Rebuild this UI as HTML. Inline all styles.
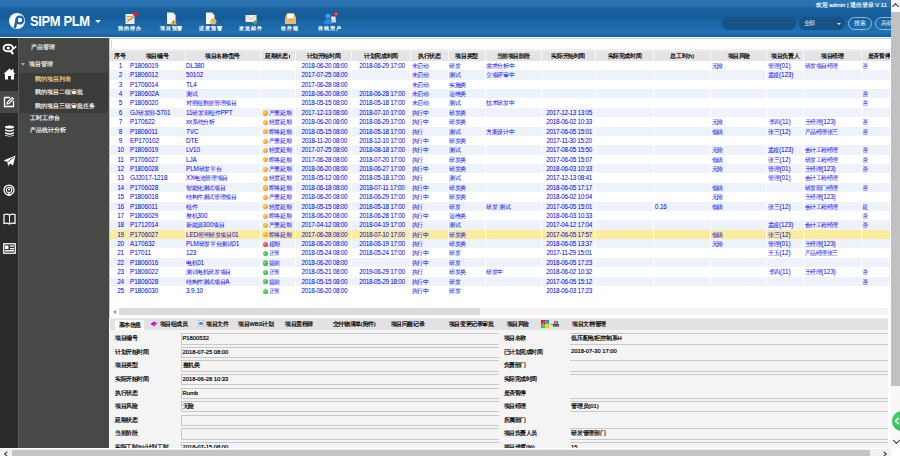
<!DOCTYPE html>
<html><head><meta charset="utf-8"><title>SIPM PLM</title>
<style>
*{box-sizing:border-box}
html,body{margin:0;padding:0}
i.k{display:inline-block;width:calc(1em + var(--ls,0px));font-style:normal;text-align:left;overflow:visible}
.nocjk i.k{text-align:center;width:1em;margin-right:var(--ls,0px);letter-spacing:0;transform:scale(1.3,1.1);transform-origin:50% 62%;-webkit-text-stroke:0.3px currentColor}
body{width:900px;height:456px;overflow:hidden;position:relative;background:#fff;font-family:"Liberation Sans",sans-serif;}
.abs{position:absolute}
#hdr{position:absolute;left:0;top:0;width:891px;height:37px;background:linear-gradient(#2d75b3 0px,#2b72b0 6px,#1a62a0 8.5px,#165f9c 12px,#145d99 19px,#1b67a6 22px,#1e6cab 30px,#2574ba 32px,#1c67a7 34px,#1a63a3 37px);}
#hline{position:absolute;left:0;top:37px;width:891px;height:1px;background:#f4f8f8}
.logo{position:absolute;left:8.8px;top:12.9px;width:16.3px;height:16.4px;border-radius:50%;background:#fbfbf6}
.brand{position:absolute;left:29.5px;top:14.3px;font-size:14.4px;line-height:14px;font-weight:bold;color:#fff;letter-spacing:-0.4px;transform:scaleX(0.9);transform-origin:0 0}
.caret{position:absolute;left:94.6px;top:20px;width:0;height:0;border-left:3.2px solid transparent;border-right:3.2px solid transparent;border-top:3.8px solid #f0f4f8}
.tb{position:absolute;top:10.5px;width:40px;text-align:center}
.tb .lb{position:absolute;top:15.8px;left:-5px;width:50px;text-align:center;font-size:5px;line-height:5px;letter-spacing:0.9px;--ls:0.9px;color:#fff;-webkit-text-stroke:0.2px #fff}
.welcome{position:absolute;right:4px;top:2.3px;font-size:5.9px;line-height:6px;color:#fff;white-space:nowrap;-webkit-text-stroke:0.15px #fff}
.pill{position:absolute;top:16.5px;height:13.5px;border-radius:7px;background:#165386}
.btn{position:absolute;top:17px;height:13px;border-radius:7px;border:1px solid rgba(190,215,240,0.75);color:#fff;font-size:5.6px;line-height:11px;text-align:center}
#icol{position:absolute;left:0;top:38px;width:18px;height:410px;background:#2a2c2a}
#icol .act{position:absolute;left:0;top:53px;width:18px;height:22px;background:#474947}
.ic{position:absolute;left:0;width:18px;height:14px;display:flex;align-items:center;justify-content:center}
#isep{position:absolute;left:17.5px;top:38px;width:1.2px;height:410px;background:#5b5d5b}
#side{position:absolute;left:18.7px;top:38px;width:90px;height:410px;background:#474947}
#sub{position:absolute;left:0;top:35px;width:89px;height:39.5px;background:#3a3c3a}
.mi{position:absolute;font-size:6px;line-height:7px;color:#ffffff;white-space:nowrap;-webkit-text-stroke:0.15px #fff}
#cborder{position:absolute;left:108.6px;top:38px;width:1.4px;height:410px;background:linear-gradient(#c4c5c4 0,#c4c5c4 280px,#fafafa 280px)}
#content{position:absolute;left:110px;top:38px;width:781px;height:410px;background:#fff;overflow:hidden}
#ctop{position:absolute;left:0;top:0;width:781px;height:1px;background:#cfd6d2}
#tbox{position:absolute;left:1.3px;top:1.5px;width:800px;height:10px;border-left:1px solid #d6d6d6;border-bottom:1px solid #eeeeee;border-radius:0 0 0 2.5px}
#thead{position:absolute;left:0;top:11.7px;width:780.4px;height:11.4px;background:#e4e4e4;border-top:1px solid #f2f2f2;overflow:hidden}
.hc{position:absolute;top:0;height:10.4px;line-height:10.4px;font-size:5.6px;color:#000;text-align:center;white-space:nowrap;-webkit-text-stroke:0.2px #000}
.hvs{position:absolute;top:0;width:1px;height:11px;background:#f7f7f7}
#tbody{position:absolute;left:0;top:22.9px;width:780.4px;height:240px;overflow:hidden}
.r{position:absolute;left:0;width:780.4px;height:9.375px}
.c{position:absolute;top:0;height:9.375px;line-height:9.8px;font-size:6.4px;font-weight:normal;letter-spacing:-0.12px;color:#0000f8;white-space:nowrap;overflow:hidden;padding-left:1px}
.c .z{font-size:5.7px;letter-spacing:-0.1px;--ls:-0.1px}
.c.ctr{text-align:center;padding-left:2px;letter-spacing:-0.3px}
.c.rt{text-align:right;padding-right:13px}
.vs{position:absolute;top:0;width:1px;height:9.375px;background:rgba(255,255,255,0.9)}
.dot{display:inline-block;width:5px;height:5.2px;border-radius:50% 50% 45% 45%;margin:0 1.3px 0 1.6px;vertical-align:-0.8px}
.dot.do{background:radial-gradient(circle at 35% 35%,#ffd060,#e88a00)}
.dot.dr{background:radial-gradient(circle at 35% 35%,#ff8080,#d01818)}
.dot.dg{background:radial-gradient(circle at 35% 35%,#80e080,#18a018)}
#hscroll{position:absolute;left:0;top:270px;width:778.4px;height:7.2px;background:#f6f2f5}
#hsarr{position:absolute;left:0;top:0;width:8.7px;height:7.2px;background:#fff;color:#9a9a9a;font-size:5px;line-height:7px;text-align:center}
#hsthumb{position:absolute;left:8.7px;top:0;width:361.3px;height:7.2px;background:#dbdcdb}
#tabs{position:absolute;left:0;top:280px;width:778.4px;height:12px;background:#e1e2e1;border-top:1px solid #ececec}
.tab{position:absolute;top:0;height:11px;line-height:11.5px;font-size:5.6px;color:#000;white-space:nowrap;-webkit-text-stroke:0.2px #000}
.tab.act{background:#fbfbfb;top:1px;height:11px;line-height:10.5px;border-radius:1.5px 1.5px 0 0;text-align:center}
.bi{font-size:4px;margin-right:1px}
#form{position:absolute;left:0;top:292px;width:778.4px;height:118px;background:#f4f4f4}
.fl{position:absolute;height:11px;line-height:11.5px;font-size:5.6px;color:#000;white-space:nowrap;-webkit-text-stroke:0.2px #000}
.fi{position:absolute;height:11.3px;background:#f4f4f4;border:1px solid #c9c9c9;border-right:none;font-size:5.8px;line-height:8.6px;padding-left:1px;color:#000;white-space:nowrap;-webkit-text-stroke:0.2px #000}
.fi2{position:absolute;height:11.3px;border-top:1px solid #c9c9c9;border-bottom:1px solid #c9c9c9;font-size:5.8px;line-height:8.6px;padding-left:1px;color:#000;white-space:nowrap;-webkit-text-stroke:0.2px #000}
.fi3{position:absolute;height:11.3px;font-size:5.8px;line-height:8.6px;padding-left:1px;color:#000;white-space:nowrap;-webkit-text-stroke:0.2px #000}
#vscroll{position:absolute;left:891px;top:0;width:9px;height:448px;background:#f8f8f8}
#vthumb{position:absolute;left:0;top:12px;width:9px;height:374px;background:#c1c1c1}
#bscroll{position:absolute;left:0;top:448px;width:891px;height:8px;background:#f0f0f0;border-top:1px solid #fff}
#bthumb{position:absolute;left:12px;top:1px;width:858px;height:8px;background:#c4c4c4}
.green{position:absolute;left:891.5px;top:410.5px;width:20px;height:20px;border-radius:50%;background:radial-gradient(circle at 40% 40%,#4cd870,#22b048);box-shadow:0 0 0 1px rgba(255,255,255,.7),0 0 2px rgba(0,0,0,.3)}
</style></head><body>
<div id="hdr">
  <div class="logo"><svg width="16.5" height="16.5" viewBox="0 0 33 33"><path d="M16.5 11 L11.5 30" fill="none" stroke="#1c63a6" stroke-width="5"/><ellipse cx="21.5" cy="14" rx="7" ry="6.8" fill="none" stroke="#1c63a6" stroke-width="4.4"/><path d="M6 9 Q12 4 19 4" fill="none" stroke="#dfe8f0" stroke-width="1.2"/></svg></div>
  <div class="brand">SIPM PLM</div>
  <div class="caret"></div>
  <div class="tb" style="left:110px"><svg width="13" height="13" viewBox="0 0 26 26" style="margin-top:0"><rect x="3" y="4" width="18" height="20" fill="#f6efe0"/><rect x="5" y="8" width="14" height="2.5" fill="#e0a050"/><rect x="5" y="13" width="10" height="2.5" fill="#e0a050"/><path d="M6 20 L20 10" stroke="#c07020" stroke-width="2"/><circle cx="22.5" cy="3.8" r="4.6" fill="#e52020"/></svg><div class="lb"><i class="k">我</i><i class="k">的</i><i class="k">待</i><i class="k">办</i></div></div>
  <div class="tb" style="left:151.5px"><svg width="13" height="13" viewBox="0 0 26 26"><path d="M4 1 H16 L21 6 V24 H4 Z" fill="#f8f6f0"/><path d="M16 1 V6 H21" fill="#ddd"/><path d="M17 15 L24 25 H10 Z" fill="#f0b820"/><rect x="16.5" y="18" width="1.2" height="4" fill="#333"/></svg><div class="lb"><i class="k">项</i><i class="k">目</i><i class="k">预</i><i class="k">警</i></div></div>
  <div class="tb" style="left:190.7px"><svg width="13" height="13" viewBox="0 0 26 26"><path d="M4 1 H16 L21 6 V24 H4 Z" fill="#f8f6f0"/><circle cx="19" cy="19" r="5.5" fill="#f6d080" stroke="#e09020" stroke-width="1.6"/><path d="M19 16 V19 H21" stroke="#906020" stroke-width="1.2" fill="none"/></svg><div class="lb"><i class="k">进</i><i class="k">度</i><i class="k">预</i><i class="k">警</i></div></div>
  <div class="tb" style="left:231px"><svg width="13" height="13" viewBox="0 0 26 26" style="margin-top:2px"><rect x="1" y="4" width="22" height="14" fill="#f4ece0"/><path d="M1 4 L12 13 L23 4" fill="none" stroke="#c8b8a0" stroke-width="1.5"/><path d="M15 19 H22 M19 15 L23 19 L19 23" stroke="#40b040" stroke-width="3" fill="none"/></svg><div class="lb"><i class="k">发</i><i class="k">送</i><i class="k">邮</i><i class="k">件</i></div></div>
  <div class="tb" style="left:270.3px"><svg width="13" height="13" viewBox="0 0 26 26"><path d="M2 10 L6 3 H20 L24 10 V24 H2 Z" fill="#e8a050"/><rect x="6" y="3" width="14" height="10" fill="#fafafa"/><path d="M2 10 L13 18 L24 10 V24 H2 Z" fill="#f0b870"/></svg><div class="lb"><i class="k">收</i><i class="k">件</i><i class="k">箱</i></div></div>
  <div class="tb" style="left:310px"><svg width="15" height="13" viewBox="0 0 30 26"><circle cx="10" cy="8" r="5" fill="#3a9ae8"/><path d="M1 24 Q1 14 10 14 Q19 14 19 24Z" fill="#2a86d8"/><rect x="16" y="9" width="9" height="6" fill="#e8e8e8"/><rect x="17" y="14" width="9" height="7" fill="#d0d0d0"/><circle cx="26" cy="4" r="4.3" fill="#e52020"/><rect x="25.3" y="1.8" width="1.4" height="4.4" fill="#fff"/></svg><div class="lb"><i class="k">在</i><i class="k">线</i><i class="k">用</i><i class="k">户</i></div></div>
  <div class="welcome"><i class="k">欢</i><i class="k">迎</i> admin | <i class="k">退</i><i class="k">出</i><i class="k">登</i><i class="k">录</i> V 11</div>
  <div class="pill" style="left:722px;width:74px"></div>
  <div class="pill" style="left:799px;width:45.5px;top:17px;height:13px"><span style="position:absolute;left:4.5px;top:3.2px;font-size:5.6px;line-height:6px;color:#fff"><i class="k">全</i><i class="k">部</i></span><span style="position:absolute;left:38px;top:5.5px;border-left:2px solid transparent;border-right:2px solid transparent;border-top:2.2px solid #e6eef6"></span></div>
  <div class="btn" style="left:848px;width:23.5px"><i class="k">搜</i><i class="k">索</i></div>
  <div class="btn" style="left:874.5px;width:24px"><i class="k">高</i><i class="k">级</i></div>
</div>
<div id="hline"></div>
<div id="icol"><div class="act"></div><div class="ic" style="top:4px"><svg width="15" height="12" viewBox="0 0 30 24"><ellipse cx="12.5" cy="10" rx="9.5" ry="6.8" fill="none" stroke="#fff" stroke-width="3.6"/><circle cx="12.5" cy="10" r="3.2" fill="#fff"/><path d="M20 7.5 L24 11 L28.5 6.5" fill="none" stroke="#fff" stroke-width="3"/><path d="M16.5 15.5 L22.5 22" stroke="#fff" stroke-width="4.2"/></svg></div><div class="ic" style="top:29px"><svg width="13" height="12" viewBox="0 0 26 24"><path d="M13 1 L1 12 L4 12 L4 23 L10 23 L10 16 L16 16 L16 23 L22 23 L22 12 L25 12 Z" fill="#fff"/><rect x="18" y="2" width="3" height="6" fill="#fff"/></svg></div><div class="ic" style="top:57px"><svg width="12" height="12" viewBox="0 0 24 24"><path d="M14 3 H3 V21 H21 V10" fill="none" stroke="#fff" stroke-width="2.6"/><path d="M8 16 L9 12 L18 3 L21 6 L12 15 Z" fill="none" stroke="#fff" stroke-width="2.2"/></svg></div><div class="ic" style="top:86px"><svg width="11" height="12" viewBox="0 0 22 24"><ellipse cx="11" cy="4" rx="9" ry="3" fill="#fff"/><path d="M2 8 Q11 13 20 8 V11 Q11 16 2 11 Z M2 14 Q11 19 20 14 V17 Q11 22 2 17 Z M2 19.5 Q11 24 20 19.5 V21 Q11 25 2 21Z" fill="#fff"/></svg></div><div class="ic" style="top:116px"><svg width="13" height="12" viewBox="0 0 26 24"><path d="M25 1 L1 11 L9 14 L10 23 L14 17 L20 21 Z" fill="#fff"/><path d="M9 14 L22 4" stroke="#2a2c2a" stroke-width="1.5"/></svg></div><div class="ic" style="top:145px"><svg width="12" height="13" viewBox="0 0 24 26"><circle cx="12" cy="12" r="10" fill="none" stroke="#fff" stroke-width="2.5"/><circle cx="12" cy="12" r="5.5" fill="none" stroke="#fff" stroke-width="2.2"/><circle cx="12" cy="11" r="2" fill="#fff"/><path d="M9 24 L12 14 L15 24Z" fill="#fff"/></svg></div><div class="ic" style="top:174px"><svg width="13" height="12" viewBox="0 0 26 24"><path d="M2 3 Q8 1 13 4 Q18 1 24 3 V21 Q18 19 13 22 Q8 19 2 21 Z" fill="none" stroke="#fff" stroke-width="2.5"/><path d="M13 4 V22" stroke="#fff" stroke-width="2"/></svg></div><div class="ic" style="top:203px"><svg width="13" height="11" viewBox="0 0 26 22"><rect x="1.5" y="1.5" width="23" height="19" fill="none" stroke="#fff" stroke-width="2.5"/><rect x="4" y="5" width="7" height="7" fill="#fff"/><rect x="14" y="5" width="8" height="2.5" fill="#fff"/><rect x="14" y="10" width="8" height="2.5" fill="#fff"/><rect x="4" y="14" width="18" height="3" fill="#fff"/></svg></div></div>
<div id="isep"></div>
<div id="side">
  <div id="sub"></div>
  <div class="mi" style="left:12.3px;top:6px"><i class="k">产</i><i class="k">品</i><i class="k">管</i><i class="k">理</i></div>
  <div style="position:absolute;left:2.5px;top:25.2px;width:0;height:0;border-left:2.1px solid transparent;border-right:2.1px solid transparent;border-top:3.8px solid #a5a7a5"></div>
  <div class="mi" style="left:10.5px;top:23px"><i class="k">项</i><i class="k">目</i><i class="k">管</i><i class="k">理</i></div>
  <div class="mi" style="left:16.8px;top:37.5px;color:#f5b400"><i class="k">我</i><i class="k">的</i><i class="k">项</i><i class="k">目</i><i class="k">列</i><i class="k">表</i></div>
  <div class="mi" style="left:16.8px;top:51px"><i class="k">我</i><i class="k">的</i><i class="k">项</i><i class="k">目</i><i class="k">二</i><i class="k">级</i><i class="k">审</i><i class="k">批</i></div>
  <div class="mi" style="left:16.8px;top:64.5px"><i class="k">我</i><i class="k">的</i><i class="k">项</i><i class="k">目</i><i class="k">三</i><i class="k">级</i><i class="k">审</i><i class="k">批</i><i class="k">任</i><i class="k">务</i></div>
  <div class="mi" style="left:11.3px;top:76.5px"><i class="k">工</i><i class="k">时</i><i class="k">工</i><i class="k">作</i><i class="k">台</i></div>
  <div class="mi" style="left:11.3px;top:88.7px"><i class="k">产</i><i class="k">品</i><i class="k">统</i><i class="k">计</i><i class="k">分</i><i class="k">析</i></div>
</div>
<div id="cborder"></div>
<div id="content">
  <div id="ctop"></div>
  <div id="tbox"></div>
  <div id="thead"><div class="hc" style="left:0.00px;width:19.00px"><i class="k">序</i><i class="k">号</i></div><div class="hc" style="left:19.00px;width:56.00px"><i class="k">项</i><i class="k">目</i><i class="k">编</i><i class="k">号</i></div><div class="hc" style="left:75.00px;width:75.00px"><i class="k">项</i><i class="k">目</i><i class="k">名</i><i class="k">称</i>/<i class="k">型</i><i class="k">号</i></div><div class="hc" style="left:150.00px;width:35.50px"><i class="k">延</i><i class="k">期</i><i class="k">状</i><i class="k">态</i> <b style="display:inline-block;width:1.3px;height:3.5px;background:#222;vertical-align:-0.5px"></b></div><div class="hc" style="left:185.50px;width:55.80px"><i class="k">计</i><i class="k">划</i><i class="k">开</i><i class="k">始</i><i class="k">时</i><i class="k">间</i></div><div class="hc" style="left:241.30px;width:59.40px"><i class="k">计</i><i class="k">划</i><i class="k">完</i><i class="k">成</i><i class="k">时</i><i class="k">间</i></div><div class="hc" style="left:300.70px;width:37.30px"><i class="k">执</i><i class="k">行</i><i class="k">状</i><i class="k">态</i></div><div class="hc" style="left:338.00px;width:37.30px"><i class="k">项</i><i class="k">目</i><i class="k">类</i><i class="k">型</i></div><div class="hc" style="left:375.30px;width:56.00px"><i class="k">当</i><i class="k">前</i><i class="k">项</i><i class="k">目</i><i class="k">阶</i><i class="k">段</i></div><div class="hc" style="left:431.30px;width:53.80px"><i class="k">实</i><i class="k">际</i><i class="k">开</i><i class="k">始</i><i class="k">时</i><i class="k">间</i></div><div class="hc" style="left:485.10px;width:58.70px"><i class="k">实</i><i class="k">际</i><i class="k">完</i><i class="k">成</i><i class="k">时</i><i class="k">间</i></div><div class="hc" style="left:543.80px;width:56.80px"><i class="k">总</i><i class="k">工</i><i class="k">时</i>(h)</div><div class="hc" style="left:600.60px;width:56.20px"><i class="k">项</i><i class="k">目</i><i class="k">风</i><i class="k">险</i></div><div class="hc" style="left:656.80px;width:36.70px"><i class="k">项</i><i class="k">目</i><i class="k">负</i><i class="k">责</i><i class="k">人</i></div><div class="hc" style="left:693.50px;width:57.50px"><i class="k">项</i><i class="k">目</i><i class="k">经</i><i class="k">理</i></div><div class="hc" style="left:751.00px;width:36.00px"><i class="k">是</i><i class="k">否</i><i class="k">暂</i><i class="k">停</i></div><b class="hvs" style="left:74.50px"></b><b class="hvs" style="left:149.50px"></b><b class="hvs" style="left:185.00px"></b><b class="hvs" style="left:240.80px"></b><b class="hvs" style="left:300.20px"></b><b class="hvs" style="left:337.50px"></b><b class="hvs" style="left:374.80px"></b><b class="hvs" style="left:430.80px"></b><b class="hvs" style="left:484.60px"></b><b class="hvs" style="left:543.30px"></b><b class="hvs" style="left:600.10px"></b><b class="hvs" style="left:656.30px"></b><b class="hvs" style="left:693.00px"></b><b class="hvs" style="left:750.50px"></b></div>
  <div id="tbody"><div class="r" style="top:0.000px;background:#ffffff"><div class="c ctr" style="left:0.00px;width:19.00px">1</div><div class="c " style="left:19.00px;width:56.00px">P1806019</div><div class="c " style="left:75.00px;width:75.00px">DL380</div><div class="c ctr" style="left:185.50px;width:55.80px">2018-06-20 08:00</div><div class="c ctr" style="left:241.30px;width:59.40px">2018-06-29 17:00</div><div class="c " style="left:300.70px;width:37.30px"><span class="z"><i class="k">未</i><i class="k">启</i><i class="k">动</i></span></div><div class="c " style="left:338.00px;width:37.30px"><span class="z"><i class="k">研</i><i class="k">发</i></span></div><div class="c " style="left:375.30px;width:56.00px"><span class="z"><i class="k">需</i><i class="k">求</i><i class="k">分</i><i class="k">析</i><i class="k">中</i></span></div><div class="c " style="left:600.60px;width:56.20px"><span class="z"><i class="k">无</i><i class="k">险</i></span></div><div class="c rt" style="left:656.80px;width:36.70px"><span class="z"><i class="k">管</i><i class="k">理</i></span>(01)</div><div class="c " style="left:693.50px;width:57.50px"><span class="z"><i class="k">研</i><i class="k">发</i><i class="k">项</i><i class="k">目</i><i class="k">经</i><i class="k">理</i></span></div><div class="c " style="left:751.00px;width:36.00px"><span class="z"><i class="k">否</i></span></div><b class="vs" style="left:74.50px"></b><b class="vs" style="left:149.50px"></b><b class="vs" style="left:185.00px"></b><b class="vs" style="left:240.80px"></b><b class="vs" style="left:300.20px"></b><b class="vs" style="left:337.50px"></b><b class="vs" style="left:374.80px"></b><b class="vs" style="left:430.80px"></b><b class="vs" style="left:484.60px"></b><b class="vs" style="left:543.30px"></b><b class="vs" style="left:600.10px"></b><b class="vs" style="left:656.30px"></b><b class="vs" style="left:693.00px"></b><b class="vs" style="left:750.50px"></b></div><div class="r" style="top:9.375px;background:#edf2fb"><div class="c ctr" style="left:0.00px;width:19.00px">2</div><div class="c " style="left:19.00px;width:56.00px">P1806012</div><div class="c " style="left:75.00px;width:75.00px">50102</div><div class="c ctr" style="left:185.50px;width:55.80px">2017-07-25 08:00</div><div class="c " style="left:300.70px;width:37.30px"><span class="z"><i class="k">未</i><i class="k">启</i><i class="k">动</i></span></div><div class="c " style="left:338.00px;width:37.30px"><span class="z"><i class="k">测</i><i class="k">试</i></span></div><div class="c " style="left:375.30px;width:56.00px"><span class="z"><i class="k">立</i><i class="k">项</i><i class="k">评</i><i class="k">审</i><i class="k">中</i></span></div><div class="c rt" style="left:656.80px;width:36.70px"><span class="z"><i class="k">孟</i><i class="k">超</i></span>(123)</div><b class="vs" style="left:74.50px"></b><b class="vs" style="left:149.50px"></b><b class="vs" style="left:185.00px"></b><b class="vs" style="left:240.80px"></b><b class="vs" style="left:300.20px"></b><b class="vs" style="left:337.50px"></b><b class="vs" style="left:374.80px"></b><b class="vs" style="left:430.80px"></b><b class="vs" style="left:484.60px"></b><b class="vs" style="left:543.30px"></b><b class="vs" style="left:600.10px"></b><b class="vs" style="left:656.30px"></b><b class="vs" style="left:693.00px"></b><b class="vs" style="left:750.50px"></b></div><div class="r" style="top:18.750px;background:#ffffff"><div class="c ctr" style="left:0.00px;width:19.00px">3</div><div class="c " style="left:19.00px;width:56.00px">P1706014</div><div class="c " style="left:75.00px;width:75.00px">TL4</div><div class="c ctr" style="left:185.50px;width:55.80px">2017-06-28 08:00</div><div class="c " style="left:300.70px;width:37.30px"><span class="z"><i class="k">未</i><i class="k">启</i><i class="k">动</i></span></div><div class="c " style="left:338.00px;width:37.30px"><span class="z"><i class="k">实</i><i class="k">施</i><i class="k">类</i></span></div><b class="vs" style="left:74.50px"></b><b class="vs" style="left:149.50px"></b><b class="vs" style="left:185.00px"></b><b class="vs" style="left:240.80px"></b><b class="vs" style="left:300.20px"></b><b class="vs" style="left:337.50px"></b><b class="vs" style="left:374.80px"></b><b class="vs" style="left:430.80px"></b><b class="vs" style="left:484.60px"></b><b class="vs" style="left:543.30px"></b><b class="vs" style="left:600.10px"></b><b class="vs" style="left:656.30px"></b><b class="vs" style="left:693.00px"></b><b class="vs" style="left:750.50px"></b></div><div class="r" style="top:28.125px;background:#edf2fb"><div class="c ctr" style="left:0.00px;width:19.00px">4</div><div class="c " style="left:19.00px;width:56.00px">P180602A</div><div class="c " style="left:75.00px;width:75.00px"><span class="z"><i class="k">测</i><i class="k">试</i></span></div><div class="c ctr" style="left:185.50px;width:55.80px">2018-06-20 08:00</div><div class="c ctr" style="left:241.30px;width:59.40px">2018-06-28 17:00</div><div class="c " style="left:300.70px;width:37.30px"><span class="z"><i class="k">未</i><i class="k">启</i><i class="k">动</i></span></div><div class="c " style="left:338.00px;width:37.30px"><span class="z"><i class="k">运</i><i class="k">维</i><i class="k">类</i></span></div><div class="c " style="left:751.00px;width:36.00px"><span class="z"><i class="k">否</i></span></div><b class="vs" style="left:74.50px"></b><b class="vs" style="left:149.50px"></b><b class="vs" style="left:185.00px"></b><b class="vs" style="left:240.80px"></b><b class="vs" style="left:300.20px"></b><b class="vs" style="left:337.50px"></b><b class="vs" style="left:374.80px"></b><b class="vs" style="left:430.80px"></b><b class="vs" style="left:484.60px"></b><b class="vs" style="left:543.30px"></b><b class="vs" style="left:600.10px"></b><b class="vs" style="left:656.30px"></b><b class="vs" style="left:693.00px"></b><b class="vs" style="left:750.50px"></b></div><div class="r" style="top:37.500px;background:#ffffff"><div class="c ctr" style="left:0.00px;width:19.00px">5</div><div class="c " style="left:19.00px;width:56.00px">P1806020</div><div class="c " style="left:75.00px;width:75.00px"><span class="z"><i class="k">对</i><i class="k">照</i><i class="k">组</i><i class="k">数</i><i class="k">据</i><i class="k">管</i><i class="k">理</i><i class="k">项</i><i class="k">目</i></span></div><div class="c ctr" style="left:185.50px;width:55.80px">2018-05-15 08:00</div><div class="c ctr" style="left:241.30px;width:59.40px">2018-05-18 17:00</div><div class="c " style="left:300.70px;width:37.30px"><span class="z"><i class="k">未</i><i class="k">启</i><i class="k">动</i></span></div><div class="c " style="left:338.00px;width:37.30px"><span class="z"><i class="k">测</i><i class="k">试</i></span></div><div class="c " style="left:375.30px;width:56.00px"><span class="z"><i class="k">技</i><i class="k">术</i><i class="k">研</i><i class="k">发</i><i class="k">中</i></span></div><div class="c " style="left:751.00px;width:36.00px"><span class="z"><i class="k">否</i></span></div><b class="vs" style="left:74.50px"></b><b class="vs" style="left:149.50px"></b><b class="vs" style="left:185.00px"></b><b class="vs" style="left:240.80px"></b><b class="vs" style="left:300.20px"></b><b class="vs" style="left:337.50px"></b><b class="vs" style="left:374.80px"></b><b class="vs" style="left:430.80px"></b><b class="vs" style="left:484.60px"></b><b class="vs" style="left:543.30px"></b><b class="vs" style="left:600.10px"></b><b class="vs" style="left:656.30px"></b><b class="vs" style="left:693.00px"></b><b class="vs" style="left:750.50px"></b></div><div class="r" style="top:46.875px;background:#edf2fb"><div class="c ctr" style="left:0.00px;width:19.00px">6</div><div class="c " style="left:19.00px;width:56.00px">GJ<span class="z"><i class="k">研</i><i class="k">发</i><i class="k">部</i></span>-5701</div><div class="c " style="left:75.00px;width:75.00px">11<span class="z"><i class="k">研</i><i class="k">发</i><i class="k">部</i><i class="k">组</i><i class="k">件</i></span>PPT</div><div class="c " style="left:150.00px;width:35.50px"><i class="dot do"></i><span class="z"><i class="k">严</i><i class="k">重</i><i class="k">延</i><i class="k">期</i></span></div><div class="c ctr" style="left:185.50px;width:55.80px">2017-12-13 08:00</div><div class="c ctr" style="left:241.30px;width:59.40px">2018-07-10 17:00</div><div class="c " style="left:300.70px;width:37.30px"><span class="z"><i class="k">执</i><i class="k">行</i><i class="k">中</i></span></div><div class="c " style="left:338.00px;width:37.30px"><span class="z"><i class="k">研</i><i class="k">发</i><i class="k">类</i></span></div><div class="c ctr" style="left:431.30px;width:53.80px">2017-12-13 13:05</div><b class="vs" style="left:74.50px"></b><b class="vs" style="left:149.50px"></b><b class="vs" style="left:185.00px"></b><b class="vs" style="left:240.80px"></b><b class="vs" style="left:300.20px"></b><b class="vs" style="left:337.50px"></b><b class="vs" style="left:374.80px"></b><b class="vs" style="left:430.80px"></b><b class="vs" style="left:484.60px"></b><b class="vs" style="left:543.30px"></b><b class="vs" style="left:600.10px"></b><b class="vs" style="left:656.30px"></b><b class="vs" style="left:693.00px"></b><b class="vs" style="left:750.50px"></b></div><div class="r" style="top:56.250px;background:#ffffff"><div class="c ctr" style="left:0.00px;width:19.00px">7</div><div class="c " style="left:19.00px;width:56.00px">P170622</div><div class="c " style="left:75.00px;width:75.00px">xx<span class="z"><i class="k">系</i><i class="k">统</i><i class="k">分</i><i class="k">析</i></span></div><div class="c " style="left:150.00px;width:35.50px"><i class="dot do"></i><span class="z"><i class="k">轻</i><i class="k">度</i><i class="k">延</i><i class="k">期</i></span></div><div class="c ctr" style="left:185.50px;width:55.80px">2018-06-20 08:00</div><div class="c ctr" style="left:241.30px;width:59.40px">2018-06-29 17:00</div><div class="c " style="left:300.70px;width:37.30px"><span class="z"><i class="k">执</i><i class="k">行</i><i class="k">中</i></span></div><div class="c " style="left:338.00px;width:37.30px"><span class="z"><i class="k">研</i><i class="k">发</i><i class="k">类</i></span></div><div class="c ctr" style="left:431.30px;width:53.80px">2018-06-02 10:33</div><div class="c " style="left:600.60px;width:56.20px"><span class="z"><i class="k">无</i><i class="k">险</i></span></div><div class="c rt" style="left:656.80px;width:36.70px"><span class="z"><i class="k">李</i><i class="k">四</i></span>(11)</div><div class="c " style="left:693.50px;width:57.50px"><span class="z"><i class="k">王</i><i class="k">经</i><i class="k">理</i></span>(123)</div><div class="c " style="left:751.00px;width:36.00px"><span class="z"><i class="k">否</i></span></div><b class="vs" style="left:74.50px"></b><b class="vs" style="left:149.50px"></b><b class="vs" style="left:185.00px"></b><b class="vs" style="left:240.80px"></b><b class="vs" style="left:300.20px"></b><b class="vs" style="left:337.50px"></b><b class="vs" style="left:374.80px"></b><b class="vs" style="left:430.80px"></b><b class="vs" style="left:484.60px"></b><b class="vs" style="left:543.30px"></b><b class="vs" style="left:600.10px"></b><b class="vs" style="left:656.30px"></b><b class="vs" style="left:693.00px"></b><b class="vs" style="left:750.50px"></b></div><div class="r" style="top:65.625px;background:#edf2fb"><div class="c ctr" style="left:0.00px;width:19.00px">8</div><div class="c " style="left:19.00px;width:56.00px">P1806011</div><div class="c " style="left:75.00px;width:75.00px">TVC</div><div class="c " style="left:150.00px;width:35.50px"><i class="dot do"></i><span class="z"><i class="k">即</i><i class="k">将</i><i class="k">延</i><i class="k">期</i></span></div><div class="c ctr" style="left:185.50px;width:55.80px">2018-05-15 08:00</div><div class="c ctr" style="left:241.30px;width:59.40px">2018-05-18 17:00</div><div class="c " style="left:300.70px;width:37.30px"><span class="z"><i class="k">执</i><i class="k">行</i></span></div><div class="c " style="left:338.00px;width:37.30px"><span class="z"><i class="k">测</i><i class="k">试</i></span></div><div class="c " style="left:375.30px;width:56.00px"><span class="z"><i class="k">方</i><i class="k">案</i><i class="k">设</i><i class="k">计</i><i class="k">中</i></span></div><div class="c ctr" style="left:431.30px;width:53.80px">2017-06-05 15:01</div><div class="c " style="left:600.60px;width:56.20px"><span class="z"><i class="k">低</i><i class="k">级</i></span></div><div class="c rt" style="left:656.80px;width:36.70px"><span class="z"><i class="k">张</i><i class="k">三</i></span>(12)</div><div class="c " style="left:693.50px;width:57.50px"><span class="z"><i class="k">产</i><i class="k">品</i><i class="k">经</i><i class="k">理</i><i class="k">张</i><i class="k">三</i></span></div><div class="c " style="left:751.00px;width:36.00px"><span class="z"><i class="k">否</i></span></div><b class="vs" style="left:74.50px"></b><b class="vs" style="left:149.50px"></b><b class="vs" style="left:185.00px"></b><b class="vs" style="left:240.80px"></b><b class="vs" style="left:300.20px"></b><b class="vs" style="left:337.50px"></b><b class="vs" style="left:374.80px"></b><b class="vs" style="left:430.80px"></b><b class="vs" style="left:484.60px"></b><b class="vs" style="left:543.30px"></b><b class="vs" style="left:600.10px"></b><b class="vs" style="left:656.30px"></b><b class="vs" style="left:693.00px"></b><b class="vs" style="left:750.50px"></b></div><div class="r" style="top:75.000px;background:#ffffff"><div class="c ctr" style="left:0.00px;width:19.00px">9</div><div class="c " style="left:19.00px;width:56.00px">EP170102</div><div class="c " style="left:75.00px;width:75.00px">DTE</div><div class="c " style="left:150.00px;width:35.50px"><i class="dot do"></i><span class="z"><i class="k">严</i><i class="k">重</i><i class="k">延</i><i class="k">期</i></span></div><div class="c ctr" style="left:185.50px;width:55.80px">2018-11-20 08:00</div><div class="c ctr" style="left:241.30px;width:59.40px">2018-12-10 17:00</div><div class="c " style="left:300.70px;width:37.30px"><span class="z"><i class="k">执</i><i class="k">行</i><i class="k">中</i></span></div><div class="c " style="left:338.00px;width:37.30px"><span class="z"><i class="k">研</i><i class="k">发</i><i class="k">类</i></span></div><div class="c ctr" style="left:431.30px;width:53.80px">2017-11-30 15:20</div><b class="vs" style="left:74.50px"></b><b class="vs" style="left:149.50px"></b><b class="vs" style="left:185.00px"></b><b class="vs" style="left:240.80px"></b><b class="vs" style="left:300.20px"></b><b class="vs" style="left:337.50px"></b><b class="vs" style="left:374.80px"></b><b class="vs" style="left:430.80px"></b><b class="vs" style="left:484.60px"></b><b class="vs" style="left:543.30px"></b><b class="vs" style="left:600.10px"></b><b class="vs" style="left:656.30px"></b><b class="vs" style="left:693.00px"></b><b class="vs" style="left:750.50px"></b></div><div class="r" style="top:84.375px;background:#edf2fb"><div class="c ctr" style="left:0.00px;width:19.00px">10</div><div class="c " style="left:19.00px;width:56.00px">P1806019</div><div class="c " style="left:75.00px;width:75.00px">LV10</div><div class="c " style="left:150.00px;width:35.50px"><i class="dot do"></i><span class="z"><i class="k">轻</i><i class="k">度</i><i class="k">延</i><i class="k">期</i></span></div><div class="c ctr" style="left:185.50px;width:55.80px">2017-07-25 08:00</div><div class="c ctr" style="left:241.30px;width:59.40px">2018-08-18 17:00</div><div class="c " style="left:300.70px;width:37.30px"><span class="z"><i class="k">执</i><i class="k">行</i><i class="k">中</i></span></div><div class="c " style="left:338.00px;width:37.30px"><span class="z"><i class="k">测</i><i class="k">试</i></span></div><div class="c ctr" style="left:431.30px;width:53.80px">2017-08-05 15:50</div><div class="c " style="left:600.60px;width:56.20px"><span class="z"><i class="k">无</i><i class="k">险</i></span></div><div class="c rt" style="left:656.80px;width:36.70px"><span class="z"><i class="k">孟</i><i class="k">超</i></span>(123)</div><div class="c " style="left:693.50px;width:57.50px"><span class="z"><i class="k">会</i><i class="k">计</i><i class="k">工</i><i class="k">程</i><i class="k">经</i><i class="k">理</i></span></div><div class="c " style="left:751.00px;width:36.00px"><span class="z"><i class="k">否</i></span></div><b class="vs" style="left:74.50px"></b><b class="vs" style="left:149.50px"></b><b class="vs" style="left:185.00px"></b><b class="vs" style="left:240.80px"></b><b class="vs" style="left:300.20px"></b><b class="vs" style="left:337.50px"></b><b class="vs" style="left:374.80px"></b><b class="vs" style="left:430.80px"></b><b class="vs" style="left:484.60px"></b><b class="vs" style="left:543.30px"></b><b class="vs" style="left:600.10px"></b><b class="vs" style="left:656.30px"></b><b class="vs" style="left:693.00px"></b><b class="vs" style="left:750.50px"></b></div><div class="r" style="top:93.750px;background:#ffffff"><div class="c ctr" style="left:0.00px;width:19.00px">11</div><div class="c " style="left:19.00px;width:56.00px">P1706027</div><div class="c " style="left:75.00px;width:75.00px">LJA</div><div class="c " style="left:150.00px;width:35.50px"><i class="dot do"></i><span class="z"><i class="k">即</i><i class="k">将</i><i class="k">延</i><i class="k">期</i></span></div><div class="c ctr" style="left:185.50px;width:55.80px">2017-06-28 08:00</div><div class="c ctr" style="left:241.30px;width:59.40px">2018-07-20 17:00</div><div class="c " style="left:300.70px;width:37.30px"><span class="z"><i class="k">执</i><i class="k">行</i></span></div><div class="c " style="left:338.00px;width:37.30px"><span class="z"><i class="k">研</i><i class="k">发</i><i class="k">类</i></span></div><div class="c ctr" style="left:431.30px;width:53.80px">2017-06-05 15:07</div><div class="c " style="left:600.60px;width:56.20px"><span class="z"><i class="k">低</i><i class="k">级</i></span></div><div class="c rt" style="left:656.80px;width:36.70px"><span class="z"><i class="k">张</i><i class="k">三</i></span>(12)</div><div class="c " style="left:693.50px;width:57.50px"><span class="z"><i class="k">研</i><i class="k">发</i><i class="k">工</i><i class="k">程</i><i class="k">经</i><i class="k">理</i></span></div><div class="c " style="left:751.00px;width:36.00px"><span class="z"><i class="k">否</i></span></div><b class="vs" style="left:74.50px"></b><b class="vs" style="left:149.50px"></b><b class="vs" style="left:185.00px"></b><b class="vs" style="left:240.80px"></b><b class="vs" style="left:300.20px"></b><b class="vs" style="left:337.50px"></b><b class="vs" style="left:374.80px"></b><b class="vs" style="left:430.80px"></b><b class="vs" style="left:484.60px"></b><b class="vs" style="left:543.30px"></b><b class="vs" style="left:600.10px"></b><b class="vs" style="left:656.30px"></b><b class="vs" style="left:693.00px"></b><b class="vs" style="left:750.50px"></b></div><div class="r" style="top:103.125px;background:#edf2fb"><div class="c ctr" style="left:0.00px;width:19.00px">12</div><div class="c " style="left:19.00px;width:56.00px">P1806028</div><div class="c " style="left:75.00px;width:75.00px">PLM<span class="z"><i class="k">研</i><i class="k">发</i><i class="k">平</i><i class="k">台</i></span></div><div class="c " style="left:150.00px;width:35.50px"><i class="dot do"></i><span class="z"><i class="k">严</i><i class="k">重</i><i class="k">延</i><i class="k">期</i></span></div><div class="c ctr" style="left:185.50px;width:55.80px">2018-06-20 08:00</div><div class="c ctr" style="left:241.30px;width:59.40px">2018-06-27 17:00</div><div class="c " style="left:300.70px;width:37.30px"><span class="z"><i class="k">执</i><i class="k">行</i><i class="k">中</i></span></div><div class="c " style="left:338.00px;width:37.30px"><span class="z"><i class="k">研</i><i class="k">发</i><i class="k">类</i></span></div><div class="c ctr" style="left:431.30px;width:53.80px">2018-06-03 10:33</div><div class="c " style="left:600.60px;width:56.20px"><span class="z"><i class="k">无</i><i class="k">险</i></span></div><div class="c rt" style="left:656.80px;width:36.70px"><span class="z"><i class="k">管</i><i class="k">理</i></span>(01)</div><div class="c " style="left:693.50px;width:57.50px"><span class="z"><i class="k">王</i><i class="k">经</i><i class="k">理</i></span>(123)</div><div class="c " style="left:751.00px;width:36.00px"><span class="z"><i class="k">否</i></span></div><b class="vs" style="left:74.50px"></b><b class="vs" style="left:149.50px"></b><b class="vs" style="left:185.00px"></b><b class="vs" style="left:240.80px"></b><b class="vs" style="left:300.20px"></b><b class="vs" style="left:337.50px"></b><b class="vs" style="left:374.80px"></b><b class="vs" style="left:430.80px"></b><b class="vs" style="left:484.60px"></b><b class="vs" style="left:543.30px"></b><b class="vs" style="left:600.10px"></b><b class="vs" style="left:656.30px"></b><b class="vs" style="left:693.00px"></b><b class="vs" style="left:750.50px"></b></div><div class="r" style="top:112.500px;background:#ffffff"><div class="c ctr" style="left:0.00px;width:19.00px">13</div><div class="c " style="left:19.00px;width:56.00px">GJ2017-1218</div><div class="c " style="left:75.00px;width:75.00px">XX<span class="z"><i class="k">电</i><i class="k">池</i><i class="k">管</i><i class="k">理</i><i class="k">项</i><i class="k">目</i></span></div><div class="c " style="left:150.00px;width:35.50px"><i class="dot do"></i><span class="z"><i class="k">轻</i><i class="k">度</i><i class="k">延</i><i class="k">期</i></span></div><div class="c ctr" style="left:185.50px;width:55.80px">2018-05-12 08:00</div><div class="c ctr" style="left:241.30px;width:59.40px">2018-05-18 17:00</div><div class="c " style="left:300.70px;width:37.30px"><span class="z"><i class="k">执</i><i class="k">行</i></span></div><div class="c " style="left:338.00px;width:37.30px"><span class="z"><i class="k">测</i><i class="k">试</i></span></div><div class="c ctr" style="left:431.30px;width:53.80px">2017-12-13 08:41</div><div class="c rt" style="left:656.80px;width:36.70px"><span class="z"><i class="k">管</i><i class="k">理</i></span>(01)</div><div class="c " style="left:693.50px;width:57.50px"><span class="z"><i class="k">会</i><i class="k">计</i><i class="k">工</i><i class="k">程</i><i class="k">经</i><i class="k">理</i></span></div><b class="vs" style="left:74.50px"></b><b class="vs" style="left:149.50px"></b><b class="vs" style="left:185.00px"></b><b class="vs" style="left:240.80px"></b><b class="vs" style="left:300.20px"></b><b class="vs" style="left:337.50px"></b><b class="vs" style="left:374.80px"></b><b class="vs" style="left:430.80px"></b><b class="vs" style="left:484.60px"></b><b class="vs" style="left:543.30px"></b><b class="vs" style="left:600.10px"></b><b class="vs" style="left:656.30px"></b><b class="vs" style="left:693.00px"></b><b class="vs" style="left:750.50px"></b></div><div class="r" style="top:121.875px;background:#edf2fb"><div class="c ctr" style="left:0.00px;width:19.00px">14</div><div class="c " style="left:19.00px;width:56.00px">P1706028</div><div class="c " style="left:75.00px;width:75.00px"><span class="z"><i class="k">智</i><i class="k">能</i><i class="k">化</i><i class="k">测</i><i class="k">试</i><i class="k">项</i><i class="k">目</i></span></div><div class="c " style="left:150.00px;width:35.50px"><i class="dot do"></i><span class="z"><i class="k">即</i><i class="k">将</i><i class="k">延</i><i class="k">期</i></span></div><div class="c ctr" style="left:185.50px;width:55.80px">2018-06-18 08:00</div><div class="c ctr" style="left:241.30px;width:59.40px">2018-07-11 17:00</div><div class="c " style="left:300.70px;width:37.30px"><span class="z"><i class="k">执</i><i class="k">行</i><i class="k">中</i></span></div><div class="c " style="left:338.00px;width:37.30px"><span class="z"><i class="k">研</i><i class="k">发</i><i class="k">类</i></span></div><div class="c ctr" style="left:431.30px;width:53.80px">2018-06-05 17:17</div><div class="c " style="left:600.60px;width:56.20px"><span class="z"><i class="k">低</i><i class="k">级</i></span></div><div class="c " style="left:693.50px;width:57.50px"><span class="z"><i class="k">研</i><i class="k">发</i><i class="k">部</i><i class="k">门</i><i class="k">经</i><i class="k">理</i></span></div><div class="c " style="left:751.00px;width:36.00px"><span class="z"><i class="k">否</i></span></div><b class="vs" style="left:74.50px"></b><b class="vs" style="left:149.50px"></b><b class="vs" style="left:185.00px"></b><b class="vs" style="left:240.80px"></b><b class="vs" style="left:300.20px"></b><b class="vs" style="left:337.50px"></b><b class="vs" style="left:374.80px"></b><b class="vs" style="left:430.80px"></b><b class="vs" style="left:484.60px"></b><b class="vs" style="left:543.30px"></b><b class="vs" style="left:600.10px"></b><b class="vs" style="left:656.30px"></b><b class="vs" style="left:693.00px"></b><b class="vs" style="left:750.50px"></b></div><div class="r" style="top:131.250px;background:#ffffff"><div class="c ctr" style="left:0.00px;width:19.00px">15</div><div class="c " style="left:19.00px;width:56.00px">P1806018</div><div class="c " style="left:75.00px;width:75.00px"><span class="z"><i class="k">结</i><i class="k">构</i><i class="k">件</i><i class="k">测</i><i class="k">试</i><i class="k">管</i><i class="k">理</i><i class="k">项</i><i class="k">目</i></span></div><div class="c " style="left:150.00px;width:35.50px"><i class="dot do"></i><span class="z"><i class="k">严</i><i class="k">重</i><i class="k">延</i><i class="k">期</i></span></div><div class="c ctr" style="left:185.50px;width:55.80px">2018-06-20 08:00</div><div class="c ctr" style="left:241.30px;width:59.40px">2018-06-29 17:00</div><div class="c " style="left:300.70px;width:37.30px"><span class="z"><i class="k">执</i><i class="k">行</i><i class="k">中</i></span></div><div class="c " style="left:338.00px;width:37.30px"><span class="z"><i class="k">研</i><i class="k">发</i><i class="k">类</i></span></div><div class="c ctr" style="left:431.30px;width:53.80px">2018-06-02 10:04</div><div class="c " style="left:600.60px;width:56.20px"><span class="z"><i class="k">无</i><i class="k">险</i></span></div><div class="c " style="left:693.50px;width:57.50px"><span class="z"><i class="k">王</i><i class="k">经</i><i class="k">理</i></span>(123)</div><b class="vs" style="left:74.50px"></b><b class="vs" style="left:149.50px"></b><b class="vs" style="left:185.00px"></b><b class="vs" style="left:240.80px"></b><b class="vs" style="left:300.20px"></b><b class="vs" style="left:337.50px"></b><b class="vs" style="left:374.80px"></b><b class="vs" style="left:430.80px"></b><b class="vs" style="left:484.60px"></b><b class="vs" style="left:543.30px"></b><b class="vs" style="left:600.10px"></b><b class="vs" style="left:656.30px"></b><b class="vs" style="left:693.00px"></b><b class="vs" style="left:750.50px"></b></div><div class="r" style="top:140.625px;background:#edf2fb"><div class="c ctr" style="left:0.00px;width:19.00px">16</div><div class="c " style="left:19.00px;width:56.00px">P1806011</div><div class="c " style="left:75.00px;width:75.00px"><span class="z"><i class="k">组</i><i class="k">件</i></span></div><div class="c " style="left:150.00px;width:35.50px"><i class="dot do"></i><span class="z"><i class="k">轻</i><i class="k">度</i><i class="k">延</i><i class="k">期</i></span></div><div class="c ctr" style="left:185.50px;width:55.80px">2018-05-15 08:00</div><div class="c ctr" style="left:241.30px;width:59.40px">2018-05-18 17:00</div><div class="c " style="left:300.70px;width:37.30px"><span class="z"><i class="k">执</i><i class="k">行</i></span></div><div class="c " style="left:338.00px;width:37.30px"><span class="z"><i class="k">研</i><i class="k">发</i></span></div><div class="c " style="left:375.30px;width:56.00px"><span class="z"><i class="k">研</i><i class="k">发</i></span> <span class="z"><i class="k">测</i><i class="k">试</i></span></div><div class="c ctr" style="left:431.30px;width:53.80px">2017-06-05 15:01</div><div class="c " style="left:543.80px;width:56.80px">0.16</div><div class="c " style="left:600.60px;width:56.20px"><span class="z"><i class="k">低</i><i class="k">级</i></span></div><div class="c rt" style="left:656.80px;width:36.70px"><span class="z"><i class="k">张</i><i class="k">三</i></span>(12)</div><div class="c " style="left:693.50px;width:57.50px"><span class="z"><i class="k">会</i><i class="k">计</i><i class="k">工</i><i class="k">程</i><i class="k">经</i><i class="k">理</i></span></div><div class="c " style="left:751.00px;width:36.00px"><span class="z"><i class="k">是</i></span></div><b class="vs" style="left:74.50px"></b><b class="vs" style="left:149.50px"></b><b class="vs" style="left:185.00px"></b><b class="vs" style="left:240.80px"></b><b class="vs" style="left:300.20px"></b><b class="vs" style="left:337.50px"></b><b class="vs" style="left:374.80px"></b><b class="vs" style="left:430.80px"></b><b class="vs" style="left:484.60px"></b><b class="vs" style="left:543.30px"></b><b class="vs" style="left:600.10px"></b><b class="vs" style="left:656.30px"></b><b class="vs" style="left:693.00px"></b><b class="vs" style="left:750.50px"></b></div><div class="r" style="top:150.000px;background:#ffffff"><div class="c ctr" style="left:0.00px;width:19.00px">17</div><div class="c " style="left:19.00px;width:56.00px">P1806029</div><div class="c " style="left:75.00px;width:75.00px"><span class="z"><i class="k">整</i><i class="k">机</i></span>300</div><div class="c " style="left:150.00px;width:35.50px"><i class="dot do"></i><span class="z"><i class="k">即</i><i class="k">将</i><i class="k">延</i><i class="k">期</i></span></div><div class="c ctr" style="left:185.50px;width:55.80px">2018-06-20 08:00</div><div class="c ctr" style="left:241.30px;width:59.40px">2018-06-28 17:00</div><div class="c " style="left:300.70px;width:37.30px"><span class="z"><i class="k">执</i><i class="k">行</i><i class="k">中</i></span></div><div class="c " style="left:338.00px;width:37.30px"><span class="z"><i class="k">运</i><i class="k">维</i><i class="k">类</i></span></div><div class="c ctr" style="left:431.30px;width:53.80px">2018-06-03 10:33</div><div class="c " style="left:751.00px;width:36.00px"><span class="z"><i class="k">否</i></span></div><b class="vs" style="left:74.50px"></b><b class="vs" style="left:149.50px"></b><b class="vs" style="left:185.00px"></b><b class="vs" style="left:240.80px"></b><b class="vs" style="left:300.20px"></b><b class="vs" style="left:337.50px"></b><b class="vs" style="left:374.80px"></b><b class="vs" style="left:430.80px"></b><b class="vs" style="left:484.60px"></b><b class="vs" style="left:543.30px"></b><b class="vs" style="left:600.10px"></b><b class="vs" style="left:656.30px"></b><b class="vs" style="left:693.00px"></b><b class="vs" style="left:750.50px"></b></div><div class="r" style="top:159.375px;background:#edf2fb"><div class="c ctr" style="left:0.00px;width:19.00px">18</div><div class="c " style="left:19.00px;width:56.00px">P1712014</div><div class="c " style="left:75.00px;width:75.00px"><span class="z"><i class="k">新</i><i class="k">能</i><i class="k">源</i></span>300<span class="z"><i class="k">项</i><i class="k">目</i></span></div><div class="c " style="left:150.00px;width:35.50px"><i class="dot do"></i><span class="z"><i class="k">严</i><i class="k">重</i><i class="k">延</i><i class="k">期</i></span></div><div class="c ctr" style="left:185.50px;width:55.80px">2017-04-12 08:00</div><div class="c ctr" style="left:241.30px;width:59.40px">2018-04-19 17:00</div><div class="c " style="left:300.70px;width:37.30px"><span class="z"><i class="k">执</i><i class="k">行</i></span></div><div class="c " style="left:338.00px;width:37.30px"><span class="z"><i class="k">测</i><i class="k">试</i></span></div><div class="c ctr" style="left:431.30px;width:53.80px">2017-04-12 17:04</div><div class="c rt" style="left:656.80px;width:36.70px"><span class="z"><i class="k">孟</i><i class="k">超</i></span>(123)</div><div class="c " style="left:693.50px;width:57.50px"><span class="z"><i class="k">会</i><i class="k">计</i><i class="k">工</i><i class="k">程</i><i class="k">经</i><i class="k">理</i></span></div><div class="c " style="left:751.00px;width:36.00px"><span class="z"><i class="k">否</i></span></div><b class="vs" style="left:74.50px"></b><b class="vs" style="left:149.50px"></b><b class="vs" style="left:185.00px"></b><b class="vs" style="left:240.80px"></b><b class="vs" style="left:300.20px"></b><b class="vs" style="left:337.50px"></b><b class="vs" style="left:374.80px"></b><b class="vs" style="left:430.80px"></b><b class="vs" style="left:484.60px"></b><b class="vs" style="left:543.30px"></b><b class="vs" style="left:600.10px"></b><b class="vs" style="left:656.30px"></b><b class="vs" style="left:693.00px"></b><b class="vs" style="left:750.50px"></b></div><div class="r" style="top:168.750px;background:#fbec9e"><div class="c ctr" style="left:0.00px;width:19.00px">19</div><div class="c " style="left:19.00px;width:56.00px">P1706027</div><div class="c " style="left:75.00px;width:75.00px">LED<span class="z"><i class="k">照</i><i class="k">明</i><i class="k">研</i><i class="k">发</i><i class="k">项</i><i class="k">目</i></span>01</div><div class="c " style="left:150.00px;width:35.50px"><i class="dot do"></i><span class="z"><i class="k">即</i><i class="k">将</i><i class="k">延</i><i class="k">期</i></span></div><div class="c ctr" style="left:185.50px;width:55.80px">2017-06-28 08:00</div><div class="c ctr" style="left:241.30px;width:59.40px">2018-07-10 17:00</div><div class="c " style="left:300.70px;width:37.30px"><span class="z"><i class="k">执</i><i class="k">行</i><i class="k">中</i></span></div><div class="c " style="left:338.00px;width:37.30px"><span class="z"><i class="k">研</i><i class="k">发</i><i class="k">类</i></span></div><div class="c ctr" style="left:431.30px;width:53.80px">2017-06-05 17:57</div><div class="c " style="left:600.60px;width:56.20px"><span class="z"><i class="k">低</i><i class="k">级</i></span></div><div class="c rt" style="left:656.80px;width:36.70px"><span class="z"><i class="k">张</i><i class="k">三</i></span>(12)</div><b class="vs" style="left:74.50px"></b><b class="vs" style="left:149.50px"></b><b class="vs" style="left:185.00px"></b><b class="vs" style="left:240.80px"></b><b class="vs" style="left:300.20px"></b><b class="vs" style="left:337.50px"></b><b class="vs" style="left:374.80px"></b><b class="vs" style="left:430.80px"></b><b class="vs" style="left:484.60px"></b><b class="vs" style="left:543.30px"></b><b class="vs" style="left:600.10px"></b><b class="vs" style="left:656.30px"></b><b class="vs" style="left:693.00px"></b><b class="vs" style="left:750.50px"></b></div><div class="r" style="top:178.125px;background:#edf2fb"><div class="c ctr" style="left:0.00px;width:19.00px">20</div><div class="c " style="left:19.00px;width:56.00px">A170632</div><div class="c " style="left:75.00px;width:75.00px">PLM<span class="z"><i class="k">研</i><i class="k">发</i><i class="k">平</i><i class="k">台</i><i class="k">测</i><i class="k">试</i></span>01</div><div class="c " style="left:150.00px;width:35.50px"><i class="dot dr"></i><span class="z"><i class="k">超</i><i class="k">期</i></span></div><div class="c ctr" style="left:185.50px;width:55.80px">2018-06-20 08:00</div><div class="c ctr" style="left:241.30px;width:59.40px">2018-06-19 17:00</div><div class="c " style="left:300.70px;width:37.30px"><span class="z"><i class="k">执</i><i class="k">行</i></span></div><div class="c " style="left:338.00px;width:37.30px"><span class="z"><i class="k">研</i><i class="k">发</i><i class="k">类</i></span></div><div class="c ctr" style="left:431.30px;width:53.80px">2018-06-05 13:37</div><div class="c " style="left:600.60px;width:56.20px"><span class="z"><i class="k">无</i><i class="k">险</i></span></div><div class="c rt" style="left:656.80px;width:36.70px"><span class="z"><i class="k">管</i><i class="k">理</i></span>(01)</div><div class="c " style="left:693.50px;width:57.50px"><span class="z"><i class="k">王</i><i class="k">经</i><i class="k">理</i></span>(123)</div><b class="vs" style="left:74.50px"></b><b class="vs" style="left:149.50px"></b><b class="vs" style="left:185.00px"></b><b class="vs" style="left:240.80px"></b><b class="vs" style="left:300.20px"></b><b class="vs" style="left:337.50px"></b><b class="vs" style="left:374.80px"></b><b class="vs" style="left:430.80px"></b><b class="vs" style="left:484.60px"></b><b class="vs" style="left:543.30px"></b><b class="vs" style="left:600.10px"></b><b class="vs" style="left:656.30px"></b><b class="vs" style="left:693.00px"></b><b class="vs" style="left:750.50px"></b></div><div class="r" style="top:187.500px;background:#ffffff"><div class="c ctr" style="left:0.00px;width:19.00px">21</div><div class="c " style="left:19.00px;width:56.00px">P17011</div><div class="c " style="left:75.00px;width:75.00px">123</div><div class="c " style="left:150.00px;width:35.50px"><i class="dot dg"></i><span class="z"><i class="k">正</i><i class="k">常</i></span></div><div class="c ctr" style="left:185.50px;width:55.80px">2018-05-24 08:00</div><div class="c ctr" style="left:241.30px;width:59.40px">2018-05-24 17:00</div><div class="c " style="left:300.70px;width:37.30px"><span class="z"><i class="k">执</i><i class="k">行</i><i class="k">中</i></span></div><div class="c " style="left:338.00px;width:37.30px"><span class="z"><i class="k">研</i><i class="k">发</i></span></div><div class="c ctr" style="left:431.30px;width:53.80px">2017-11-29 15:01</div><div class="c rt" style="left:656.80px;width:36.70px"><span class="z"><i class="k">王</i><i class="k">五</i></span>(12)</div><div class="c " style="left:693.50px;width:57.50px"><span class="z"><i class="k">产</i><i class="k">品</i><i class="k">经</i><i class="k">理</i><i class="k">张</i><i class="k">三</i></span></div><b class="vs" style="left:74.50px"></b><b class="vs" style="left:149.50px"></b><b class="vs" style="left:185.00px"></b><b class="vs" style="left:240.80px"></b><b class="vs" style="left:300.20px"></b><b class="vs" style="left:337.50px"></b><b class="vs" style="left:374.80px"></b><b class="vs" style="left:430.80px"></b><b class="vs" style="left:484.60px"></b><b class="vs" style="left:543.30px"></b><b class="vs" style="left:600.10px"></b><b class="vs" style="left:656.30px"></b><b class="vs" style="left:693.00px"></b><b class="vs" style="left:750.50px"></b></div><div class="r" style="top:196.875px;background:#edf2fb"><div class="c ctr" style="left:0.00px;width:19.00px">22</div><div class="c " style="left:19.00px;width:56.00px">P1806016</div><div class="c " style="left:75.00px;width:75.00px"><span class="z"><i class="k">电</i><i class="k">机</i></span>01</div><div class="c " style="left:150.00px;width:35.50px"><i class="dot dg"></i><span class="z"><i class="k">提</i><i class="k">前</i></span></div><div class="c ctr" style="left:185.50px;width:55.80px">2018-06-20 08:00</div><div class="c " style="left:300.70px;width:37.30px"><span class="z"><i class="k">执</i><i class="k">行</i><i class="k">中</i></span></div><div class="c " style="left:338.00px;width:37.30px"><span class="z"><i class="k">研</i><i class="k">发</i></span></div><div class="c ctr" style="left:431.30px;width:53.80px">2018-06-05 17:23</div><b class="vs" style="left:74.50px"></b><b class="vs" style="left:149.50px"></b><b class="vs" style="left:185.00px"></b><b class="vs" style="left:240.80px"></b><b class="vs" style="left:300.20px"></b><b class="vs" style="left:337.50px"></b><b class="vs" style="left:374.80px"></b><b class="vs" style="left:430.80px"></b><b class="vs" style="left:484.60px"></b><b class="vs" style="left:543.30px"></b><b class="vs" style="left:600.10px"></b><b class="vs" style="left:656.30px"></b><b class="vs" style="left:693.00px"></b><b class="vs" style="left:750.50px"></b></div><div class="r" style="top:206.250px;background:#ffffff"><div class="c ctr" style="left:0.00px;width:19.00px">23</div><div class="c " style="left:19.00px;width:56.00px">P1806022</div><div class="c " style="left:75.00px;width:75.00px"><span class="z"><i class="k">测</i><i class="k">试</i><i class="k">电</i><i class="k">机</i><i class="k">研</i><i class="k">发</i><i class="k">项</i><i class="k">目</i></span></div><div class="c " style="left:150.00px;width:35.50px"><i class="dot dg"></i><span class="z"><i class="k">正</i><i class="k">常</i></span></div><div class="c ctr" style="left:185.50px;width:55.80px">2018-05-21 08:00</div><div class="c ctr" style="left:241.30px;width:59.40px">2019-06-29 17:00</div><div class="c " style="left:300.70px;width:37.30px"><span class="z"><i class="k">执</i><i class="k">行</i></span></div><div class="c " style="left:338.00px;width:37.30px"><span class="z"><i class="k">研</i><i class="k">发</i><i class="k">类</i></span></div><div class="c " style="left:375.30px;width:56.00px"><span class="z"><i class="k">研</i><i class="k">发</i><i class="k">中</i></span></div><div class="c ctr" style="left:431.30px;width:53.80px">2018-06-02 10:32</div><div class="c rt" style="left:656.80px;width:36.70px"><span class="z"><i class="k">李</i><i class="k">四</i></span>(11)</div><div class="c " style="left:693.50px;width:57.50px"><span class="z"><i class="k">王</i><i class="k">经</i><i class="k">理</i></span>(123)</div><div class="c " style="left:751.00px;width:36.00px"><span class="z"><i class="k">否</i></span></div><b class="vs" style="left:74.50px"></b><b class="vs" style="left:149.50px"></b><b class="vs" style="left:185.00px"></b><b class="vs" style="left:240.80px"></b><b class="vs" style="left:300.20px"></b><b class="vs" style="left:337.50px"></b><b class="vs" style="left:374.80px"></b><b class="vs" style="left:430.80px"></b><b class="vs" style="left:484.60px"></b><b class="vs" style="left:543.30px"></b><b class="vs" style="left:600.10px"></b><b class="vs" style="left:656.30px"></b><b class="vs" style="left:693.00px"></b><b class="vs" style="left:750.50px"></b></div><div class="r" style="top:215.625px;background:#edf2fb"><div class="c ctr" style="left:0.00px;width:19.00px">24</div><div class="c " style="left:19.00px;width:56.00px">P1806028</div><div class="c " style="left:75.00px;width:75.00px"><span class="z"><i class="k">结</i><i class="k">构</i><i class="k">件</i><i class="k">测</i><i class="k">试</i><i class="k">项</i><i class="k">目</i></span>A</div><div class="c " style="left:150.00px;width:35.50px"><i class="dot dg"></i><span class="z"><i class="k">提</i><i class="k">前</i></span></div><div class="c ctr" style="left:185.50px;width:55.80px">2018-05-15 08:00</div><div class="c ctr" style="left:241.30px;width:59.40px">2018-05-29 18:00</div><div class="c " style="left:300.70px;width:37.30px"><span class="z"><i class="k">执</i><i class="k">行</i><i class="k">中</i></span></div><div class="c " style="left:338.00px;width:37.30px"><span class="z"><i class="k">研</i><i class="k">发</i></span></div><div class="c ctr" style="left:431.30px;width:53.80px">2017-06-05 15:12</div><div class="c " style="left:751.00px;width:36.00px"><span class="z"><i class="k">否</i></span></div><b class="vs" style="left:74.50px"></b><b class="vs" style="left:149.50px"></b><b class="vs" style="left:185.00px"></b><b class="vs" style="left:240.80px"></b><b class="vs" style="left:300.20px"></b><b class="vs" style="left:337.50px"></b><b class="vs" style="left:374.80px"></b><b class="vs" style="left:430.80px"></b><b class="vs" style="left:484.60px"></b><b class="vs" style="left:543.30px"></b><b class="vs" style="left:600.10px"></b><b class="vs" style="left:656.30px"></b><b class="vs" style="left:693.00px"></b><b class="vs" style="left:750.50px"></b></div><div class="r" style="top:225.000px;background:#ffffff"><div class="c ctr" style="left:0.00px;width:19.00px">25</div><div class="c " style="left:19.00px;width:56.00px">P1806030</div><div class="c " style="left:75.00px;width:75.00px">3.9.10</div><div class="c " style="left:150.00px;width:35.50px"><i class="dot dg"></i><span class="z"><i class="k">正</i><i class="k">常</i></span></div><div class="c ctr" style="left:185.50px;width:55.80px">2018-06-20 08:00</div><div class="c " style="left:300.70px;width:37.30px"><span class="z"><i class="k">执</i><i class="k">行</i><i class="k">中</i></span></div><div class="c " style="left:338.00px;width:37.30px"><span class="z"><i class="k">研</i><i class="k">发</i></span></div><div class="c ctr" style="left:431.30px;width:53.80px">2018-06-03 17:23</div><b class="vs" style="left:74.50px"></b><b class="vs" style="left:149.50px"></b><b class="vs" style="left:185.00px"></b><b class="vs" style="left:240.80px"></b><b class="vs" style="left:300.20px"></b><b class="vs" style="left:337.50px"></b><b class="vs" style="left:374.80px"></b><b class="vs" style="left:430.80px"></b><b class="vs" style="left:484.60px"></b><b class="vs" style="left:543.30px"></b><b class="vs" style="left:600.10px"></b><b class="vs" style="left:656.30px"></b><b class="vs" style="left:693.00px"></b><b class="vs" style="left:750.50px"></b></div></div>
  <div id="hscroll"><div id="hsarr"><span style="position:absolute;left:2.6px;top:1.6px;width:0;height:0;border-top:2px solid transparent;border-bottom:2px solid transparent;border-right:3px solid #8a8a8a"></span></div><div id="hsthumb"></div></div>
  <div id="tabs"><div class="tab act" style="left:4.9px;width:29.6px"><i class="k">基</i><i class="k">本</i><i class="k">信</i><i class="k">息</i></div><div class="tab" style="left:40.0px"><svg width="8" height="6" viewBox="0 0 16 12" style="margin-right:1.5px;vertical-align:-0.5px"><path d="M1 6 L8 1 L15 4 L8 11 Z" fill="#e020e0"/><path d="M3 6 L8 3" stroke="#600060" stroke-width="1.5"/></svg><i class="k">项</i><i class="k">目</i><i class="k">组</i><i class="k">成</i><i class="k">员</i></div><div class="tab" style="left:88.3px"><svg width="6" height="7" viewBox="0 0 12 14" style="margin-right:2px;vertical-align:-1px"><rect x="0.5" y="0.5" width="11" height="13" fill="#fff" stroke="#9aa" /><rect x="2.5" y="4" width="7" height="6" fill="#4a8ad8"/></svg><i class="k">项</i><i class="k">目</i><i class="k">文</i><i class="k">件</i></div><div class="tab" style="left:128.3px"><i class="k">项</i><i class="k">目</i>WBS<i class="k">计</i><i class="k">划</i></div><div class="tab" style="left:175.0px"><i class="k">项</i><i class="k">目</i><i class="k">里</i><i class="k">程</i><i class="k">碑</i></div><div class="tab" style="left:222.8px"><i class="k">交</i><i class="k">付</i><i class="k">物</i><i class="k">清</i><i class="k">单</i>(<i class="k">附</i><i class="k">件</i>)</div><div class="tab" style="left:280.6px"><i class="k">项</i><i class="k">目</i><i class="k">问</i><i class="k">题</i><i class="k">记</i><i class="k">录</i></div><div class="tab" style="left:338.9px"><i class="k">项</i><i class="k">目</i><i class="k">变</i><i class="k">更</i><i class="k">记</i><i class="k">录</i><i class="k">审</i><i class="k">批</i></div><div class="tab" style="left:396.7px"><i class="k">项</i><i class="k">目</i><i class="k">风</i><i class="k">险</i></div><div class="tab" style="left:431.1px"><svg width="8" height="8" viewBox="0 0 16 16" style="margin-right:2px;vertical-align:-1.5px"><rect x="0" y="0" width="8" height="8" fill="#e02020"/><rect x="8" y="0" width="8" height="8" fill="#2a8ae0"/><rect x="0" y="8" width="8" height="8" fill="#40c040"/><rect x="8" y="8" width="8" height="8" fill="#f0d000"/><path d="M4 4h8v8h-8z" fill="none" stroke="#fff" stroke-width="1" opacity=".6"/></svg>·<i class="k">品</i></div><div class="tab" style="left:462.2px"><i class="k">项</i><i class="k">目</i><i class="k">文</i><i class="k">档</i><i class="k">管</i><i class="k">理</i></div></div>
  <div id="form"><div class="fl" style="left:5px;top:3.30px"><i class="k">项</i><i class="k">目</i><i class="k">编</i><i class="k">号</i></div><div class="fi" style="left:70.5px;top:3.30px;width:318px">P1800532</div><div class="fl" style="left:5px;top:16.86px"><i class="k">计</i><i class="k">划</i><i class="k">开</i><i class="k">始</i><i class="k">时</i><i class="k">间</i></div><div class="fi" style="left:70.5px;top:16.86px;width:318px">2018-07-25 08:00</div><div class="fl" style="left:5px;top:30.42px"><i class="k">项</i><i class="k">目</i><i class="k">类</i><i class="k">型</i></div><div class="fi" style="left:70.5px;top:30.42px;width:318px"><i class="k">整</i><i class="k">机</i><i class="k">类</i></div><div class="fl" style="left:5px;top:43.98px"><i class="k">实</i><i class="k">际</i><i class="k">开</i><i class="k">始</i><i class="k">时</i><i class="k">间</i></div><div class="fi" style="left:70.5px;top:43.98px;width:318px">2018-06-28 10:33</div><div class="fl" style="left:5px;top:57.54px"><i class="k">执</i><i class="k">行</i><i class="k">状</i><i class="k">态</i></div><div class="fi" style="left:70.5px;top:57.54px;width:318px">Rumb</div><div class="fl" style="left:5px;top:71.10px"><i class="k">项</i><i class="k">目</i><i class="k">风</i><i class="k">险</i></div><div class="fi" style="left:70.5px;top:71.10px;width:318px"><i class="k">无</i><i class="k">险</i></div><div class="fl" style="left:5px;top:84.66px"><i class="k">延</i><i class="k">期</i><i class="k">状</i><i class="k">态</i></div><div class="fi" style="left:70.5px;top:84.66px;width:318px"></div><div class="fl" style="left:5px;top:98.22px"><i class="k">当</i><i class="k">前</i><i class="k">阶</i><i class="k">段</i></div><div class="fi" style="left:70.5px;top:98.22px;width:318px"></div><div class="fl" style="left:5px;top:111.78px"><i class="k">实</i><i class="k">际</i><i class="k">工</i><i class="k">时</i>(h)/<i class="k">计</i><i class="k">划</i><i class="k">工</i><i class="k">时</i></div><div class="fi" style="left:70.5px;top:111.78px;width:318px">2018-07-15 08:00</div><div class="fl" style="left:393.5px;top:3.30px"><i class="k">项</i><i class="k">目</i><i class="k">名</i><i class="k">称</i></div><div class="fi2" style="left:460px;top:3.30px;width:318px;"><i class="k">低</i><i class="k">压</i><i class="k">配</i><i class="k">电</i><i class="k">柜</i><i class="k">控</i><i class="k">制</i><i class="k">系</i>H</div><div class="fl" style="left:393.5px;top:16.86px"><i class="k">已</i><i class="k">计</i><i class="k">划</i><i class="k">完</i><i class="k">成</i><i class="k">时</i><i class="k">间</i></div><div class="fi3" style="left:460px;top:16.86px;width:318px;">2018-07-30 17:00</div><div class="fl" style="left:393.5px;top:30.42px"><i class="k">负</i><i class="k">责</i><i class="k">部</i><i class="k">门</i></div><div class="fi2" style="left:460px;top:30.42px;width:318px;"></div><div class="fl" style="left:393.5px;top:43.98px"><i class="k">实</i><i class="k">际</i><i class="k">完</i><i class="k">成</i><i class="k">时</i><i class="k">间</i></div><div class="fi2" style="left:460px;top:43.98px;width:318px;height:24.9px;"></div><div class="fl" style="left:393.5px;top:57.54px"><i class="k">是</i><i class="k">否</i><i class="k">暂</i><i class="k">停</i></div><div class="fi3" style="left:460px;top:57.54px;width:318px;"></div><div class="fl" style="left:393.5px;top:71.10px"><i class="k">项</i><i class="k">目</i><i class="k">经</i><i class="k">理</i></div><div class="fi2" style="left:460px;top:71.10px;width:318px;"><i class="k">管</i><i class="k">理</i><i class="k">员</i>(01)</div><div class="fl" style="left:393.5px;top:84.66px"><i class="k">所</i><i class="k">属</i><i class="k">部</i><i class="k">门</i></div><div class="fi3" style="left:460px;top:84.66px;width:318px;"></div><div class="fl" style="left:393.5px;top:98.22px"><i class="k">项</i><i class="k">目</i><i class="k">负</i><i class="k">责</i><i class="k">人</i><i class="k">员</i></div><div class="fi2" style="left:460px;top:98.22px;width:318px;"><i class="k">研</i><i class="k">发</i><i class="k">管</i><i class="k">理</i><i class="k">部</i><i class="k">门</i></div><div class="fl" style="left:393.5px;top:111.78px"><i class="k">项</i><i class="k">目</i><i class="k">进</i><i class="k">度</i>(%)</div><div class="fi2" style="left:460px;top:111.78px;width:318px;">15</div></div>
</div>
<div id="vscroll"><div style="position:absolute;left:1.5px;top:4px;width:5px;height:5px;border-left:1.3px solid #333;border-top:1.3px solid #333;transform:rotate(45deg)"></div><div id="vthumb"></div><div style="position:absolute;left:2.5px;top:438px;width:5px;height:5px;border-right:1.3px solid #333;border-bottom:1.3px solid #333;transform:rotate(45deg)"></div></div>
<div id="bscroll"><div style="position:absolute;left:4.5px;top:2.5px;width:4px;height:4px;border-left:1.3px solid #333;border-bottom:1.3px solid #333;transform:rotate(45deg)"></div><div id="bthumb"></div><div style="position:absolute;left:882px;top:2.5px;width:4px;height:4px;border-right:1.3px solid #333;border-top:1.3px solid #333;transform:rotate(45deg)"></div></div>
<script>
(function(){try{var s=document.createElement('span');s.style.cssText='position:absolute;left:-9999px;top:0;font:100px "Liberation Sans",sans-serif;white-space:nowrap';s.textContent='\u9879\u76ee\u7ba1\u7406';document.body.appendChild(s);var w=s.getBoundingClientRect().width;document.body.removeChild(s);if(w<360){document.documentElement.className+=' nocjk';}}catch(e){}})();
</script>
<div class="green"><svg width="20" height="20" viewBox="0 0 20 20" style="position:absolute;left:0;top:0"><path d="M6.5 7 L3.5 10 L6.5 13 M13.5 7 L16.5 10 L13.5 13" fill="none" stroke="#fff" stroke-width="1.6"/><circle cx="8.5" cy="10" r="0.9" fill="#fff"/><circle cx="11.5" cy="10" r="0.9" fill="#fff"/></svg></div>
</body></html>
